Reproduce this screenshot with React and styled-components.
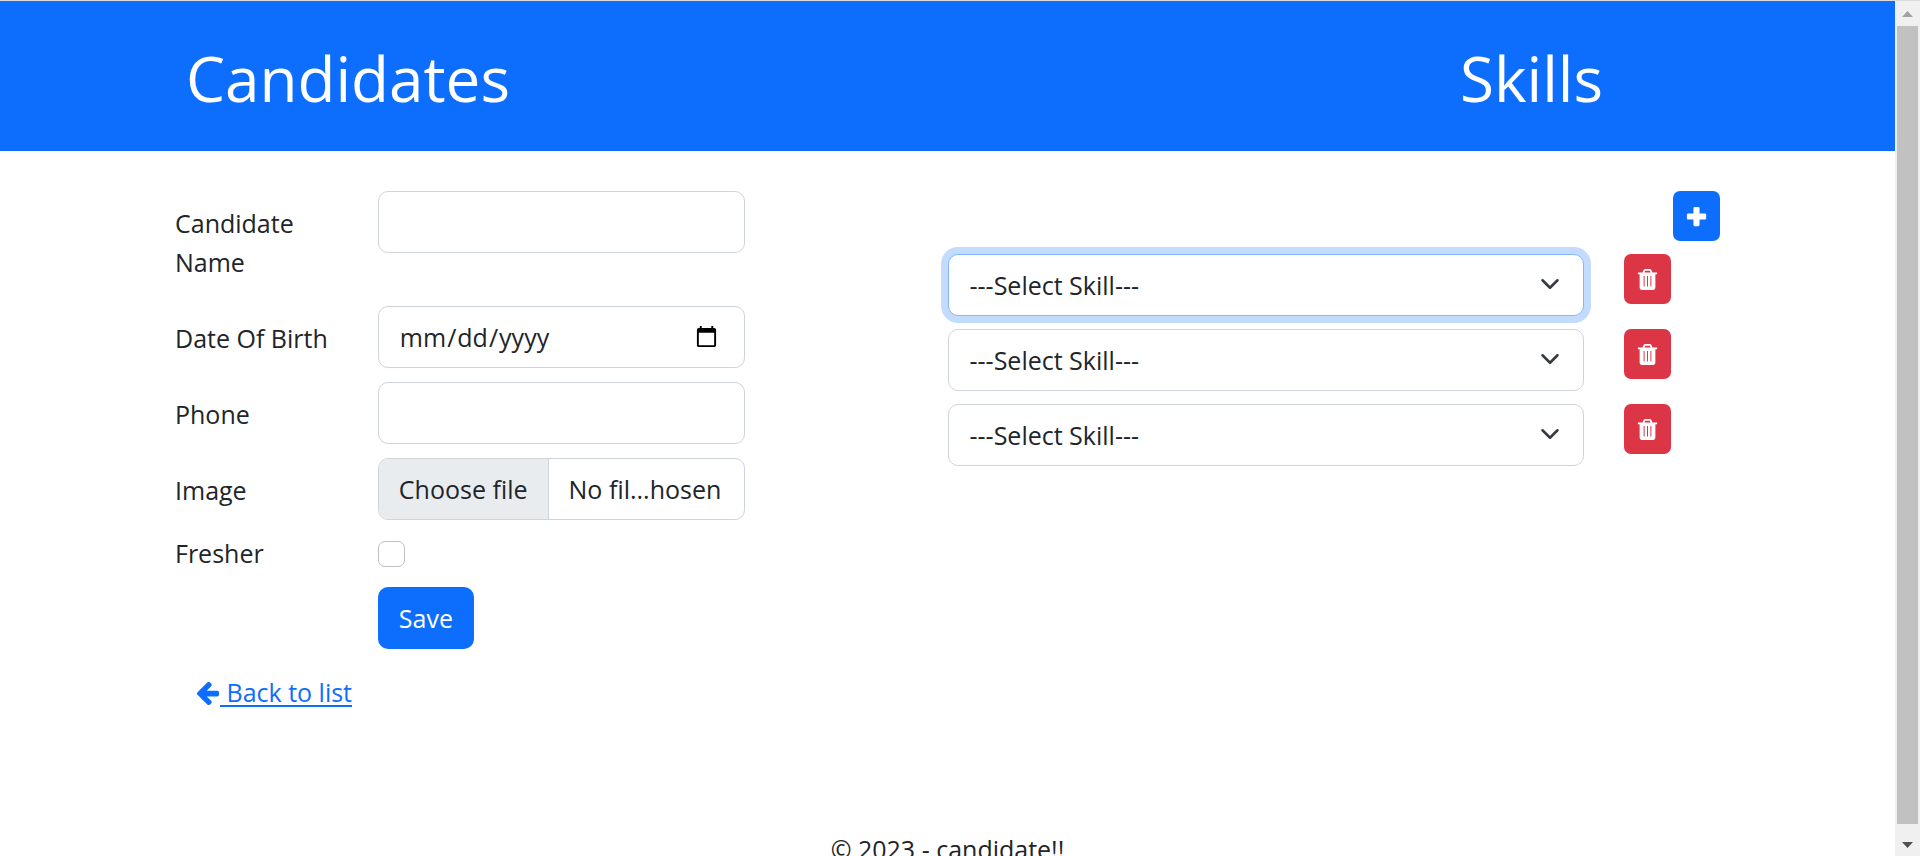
import React from "react";
import styled, { createGlobalStyle, css } from "styled-components";

const GlobalStyle = createGlobalStyle`
  *, *::before, *::after { box-sizing: border-box; }
  body {
    margin: 0;
    background: #fff;
    color: #212529;
    font-family: "Open Sans", "Noto Sans", sans-serif;
    font-size: 25px;
    line-height: 39px;
  }
`;

const Shell = styled.div`
  display: grid;
  grid-template-columns: minmax(0, 1fr) 25px;
  height: 100vh;
  border-top: 1px solid #d9dadc;
  overflow: hidden;
`;

const Page = styled.div`
  min-width: 0;
  overflow: hidden;
`;

const Header = styled.header`
  display: flex;
  justify-content: space-between;
  padding: 37px 292px 33px 186px;
  background: #0d6efd;
  color: #fff;
`;

const Title = styled.h1`
  margin: 0;
  font-size: 62px;
  font-weight: 400;
  line-height: 80px;
`;

const Main = styled.main`
  display: grid;
  grid-template-columns: 1fr 1fr;
  padding: 40px 175px 0;
`;

const Form = styled.form`
  display: flex;
  flex-direction: column;
  gap: 14px;
`;

const Field = styled.div`
  display: grid;
  grid-template-columns: 203fr 367fr 203fr;
  align-items: start;
`;

const Label = styled.label`
  padding: ${(p) => (p.$compact ? "0" : "13px")} 40px ${(p) => (p.$tall ? "10px" : "0")} 0;
  white-space: ${(p) => (p.$tall ? "normal" : "nowrap")};
`;

const control = css`
  width: 100%;
  height: 62px;
  border: 1px solid #ced4da;
  border-radius: 10px;
  background: #fff;
  color: inherit;
  font: inherit;
`;

const Input = styled.input`
  ${control}
  padding: 10px 23px 10px 20px;
  outline: none;
`;

const FilePicker = styled.div`
  ${control}
  position: relative;
  display: flex;
  overflow: hidden;
  white-space: nowrap;
`;

const FileButton = styled.span`
  padding: 11px 20px;
  border-right: 1px solid #ced4da;
  background: #e9ecef;
`;

const FileName = styled.span`
  padding: 11px 0 0 20px;
`;

const HiddenFile = styled.input`
  position: absolute;
  inset: 0;
  width: 100%;
  opacity: 0;
`;

const Checkbox = styled.input`
  appearance: none;
  width: 27px;
  height: 26px;
  margin: 7px 0 0;
  border: 1px solid #bfbfbf;
  border-radius: 7px;
  background: #fff;
`;

const SaveButton = styled.button`
  grid-column: 2;
  justify-self: start;
  height: 62px;
  padding: 0 21px;
  border: 0;
  border-radius: 10px;
  background: #0d6efd;
  color: #fff;
  font: inherit;
`;

const BackLink = styled.a`
  align-self: start;
  margin: 10px 0 0 22px;
  color: #0d6efd;
  text-decoration: underline;
  text-decoration-thickness: 2px;
  text-underline-offset: 3px;
  white-space: pre;
`;

const Skills = styled.section`
  display: flex;
  flex-direction: column;
  gap: 13px;
`;

const SkillRow = styled.div`
  display: flex;
  align-items: flex-start;
  gap: 40px;
  padding-right: 49px;
`;

const SelectWrap = styled.div`
  position: relative;
  flex: 1;
`;

const Select = styled.select`
  ${control}
  display: block;
  appearance: none;
  padding: 10px 60px 10px 21px;
  outline: none;
  border-color: ${(p) => (p.$active ? "#86b7fe" : "#ced4da")};
  box-shadow: ${(p) => (p.$active ? "0 0 0 7px #c2dbff" : "none")};
`;

const Chevron = styled.svg`
  position: absolute;
  right: 24px;
  top: 20px;
  width: 20px;
  height: 20px;
  pointer-events: none;
`;

const IconButton = styled.button`
  display: flex;
  align-items: center;
  justify-content: center;
  flex: none;
  align-self: ${(p) => (p.$add ? "flex-end" : "flex-start")};
  width: 47px;
  height: 50px;
  padding: 0;
  border: 0;
  border-radius: 7px;
  background: ${(p) => (p.$add ? "#0d6efd" : "#dc3545")};
  color: #fff;
`;

const Glyph = styled.svg`
  width: ${(p) => p.$size}px;
  height: ${(p) => p.$size}px;
  fill: currentColor;
`;

const ArrowGlyph = styled(Glyph)`
  vertical-align: -3px;
`;

const Footer = styled.footer`
  padding-top: 118px;
  text-align: center;
  white-space: nowrap;
`;

const Scrollbar = styled.div`
  display: flex;
  flex-direction: column;
  align-items: center;
  background: #f0f0f0;
`;

const Thumb = styled.div`
  flex: 1;
  width: 21px;
  background: #c1c1c1;
`;

const Arrow = styled.svg`
  width: 25px;
  height: ${(p) => p.$height}px;
`;

const skills = ["skill-1", "skill-2", "skill-3"];

export default function App() {
  return (
    <>
      <GlobalStyle />
      <Shell>
        <Page>
          <Header>
            <Title>Candidates</Title>
            <Title as="h2">Skills</Title>
          </Header>
          <Main>
            <Form onSubmit={(e) => e.preventDefault()}>
              <Field>
                <Label htmlFor="name" $tall>Candidate Name</Label>
                <Input id="name" type="text" />
              </Field>
              <Field>
                <Label htmlFor="dob">Date Of Birth</Label>
                <Input id="dob" type="date" />
              </Field>
              <Field>
                <Label htmlFor="phone">Phone</Label>
                <Input id="phone" type="text" />
              </Field>
              <Field>
                <Label htmlFor="image">Image</Label>
                <FilePicker>
                  <FileButton>Choose file</FileButton>
                  <FileName>No fil...hosen</FileName>
                  <HiddenFile id="image" type="file" />
                </FilePicker>
              </Field>
              <Field>
                <Label htmlFor="fresher" $compact>Fresher</Label>
                <Checkbox id="fresher" type="checkbox" />
              </Field>
              <Field>
                <SaveButton type="submit">Save</SaveButton>
              </Field>
              <BackLink href="#list">
                <ArrowGlyph $size={23} viewBox="64 64 1536 1536" aria-hidden="true">
                  <path d="M1536 768v128q0 53-32.500 90.500t-84.500 37.500h-704l293 294q38 36 38 90t-38 90l-75 76q-37 37-90 37-52 0-91-37l-651-652q-37-37-37-90 0-52 37-91l651-650q38-38 91-38 52 0 90 38l75 74q38 38 38 91t-38 91l-293 293h704q52 0 84.500 37.500t32.500 90.500z" />
                </ArrowGlyph>
                {" Back to list"}
              </BackLink>
            </Form>
            <Skills>
              <IconButton type="button" $add aria-label="Add skill">
                <Glyph $size={21} viewBox="-64 -64 1536 1536" aria-hidden="true">
                  <path d="M1408 576v256q0 40-28 68t-68 28h-384v384q0 40-28 68t-68 28h-256q-40 0-68-28t-28-68v-384h-384q-40 0-68-28t-28-68v-256q0-40 28-68t68-28h384v-384q0-40 28-68t68-28h256q40 0 68 28t28 68v384h384q40 0 68 28t28 68z" />
                </Glyph>
              </IconButton>
              {skills.map((id, i) => (
                <SkillRow key={id}>
                  <SelectWrap>
                    <Select id={id} aria-label="Skill" $active={i === 0}>
                      <option>---Select Skill---</option>
                    </Select>
                    <Chevron viewBox="0 0 16 16" aria-hidden="true">
                      <path d="m2 5 6 6 6-6" fill="none" stroke="#343a40" strokeWidth="2" strokeLinecap="round" strokeLinejoin="round" />
                    </Chevron>
                  </SelectWrap>
                  <IconButton type="button" aria-label="Delete skill">
                    <Glyph $size={21} viewBox="-64 0 1536 1536" aria-hidden="true">
                      <path d="M420 520h72v760h-72zM668 520h72v760h-72zM916 520h72v760h-72zM480 256h448l-48-117q-7-9-17-11h-317q-10 2-17 11zM1408 288v64q0 14-9 23t-23 9h-96v948q0 83-47 143.500t-113 60.500h-832q-66 0-113-58.500t-47-141.500v-952h-96q-14 0-23-9t-9-23v-64q0-14 9-23t23-9h309l70-167q15-37 54-63t79-26h320q40 0 79 26t54 63l70 167h309q14 0 23 9t9 23z" fillRule="evenodd" />
                    </Glyph>
                  </IconButton>
                </SkillRow>
              ))}
            </Skills>
          </Main>
          <Footer>© 2023 - candidate!!</Footer>
        </Page>
        <Scrollbar aria-hidden="true">
          <Arrow $height={25} viewBox="0 0 25 25">
            <path d="M7 16 12.500 10 18 16z" fill="#a3a3a3" />
          </Arrow>
          <Thumb />
          <Arrow $height={32} viewBox="0 0 25 32">
            <path d="M7 18 12.500 24 18 18z" fill="#505050" />
          </Arrow>
        </Scrollbar>
      </Shell>
    </>
  );
}
